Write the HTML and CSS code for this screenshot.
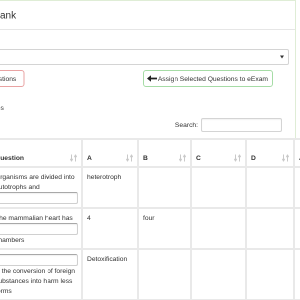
FILE: index.html
```html
<!DOCTYPE html>
<html lang="en">
<head>
    <meta charset="UTF-8">
    <title>Question Bank</title>
    <link rel="stylesheet" href="styles.css">
</head>
<body>
    <!-- Page drawn at twice its size, then scaled down -->
    <div class="page">
        <!-- Panel principal -->
        <div class="panel">
            <div class="panel-heading">Question Bank</div>

            <div class="panel-body">
                <!-- Choix du sujet -->
                <div class="select"><span class="caret"></span></div>

                <!-- Boutons -->
                <div class="actions">
                    <button class="btn btn-red">Delete Selected Questions</button>
                    <button class="btn btn-green">
                        <svg class="arrow" width="20" height="14" viewBox="0 0 10 7"><path d="M0 3.5 L4 0.3 L4 2.6 L10 2.6 L10 4.4 L4 4.4 L4 6.7 Z"/></svg>
                        Assign Selected Questions to eExam
                    </button>
                </div>

                <div class="length">
                    Show <span class="mini-select"></span> entries
                </div>

                <div class="search">
                    <label>Search:</label>
                    <input type="text" class="search-input">
                </div>

                <!-- Tableau des questions -->
                <table class="grid">
                    <thead>
                        <tr>
                            <th class="c-check"><input type="checkbox" class="check"></th>
                            <th class="c-no"><div class="th-in"><span>#</span></div></th>
                            <th class="c-q"><div class="th-in"><span>Question</span><svg class="sort" width="14" height="14" viewBox="0 0 7 7"><path d="M1.5 0 V5.5 M0.3 4.3 L1.5 6.6 L2.7 4.3 M5.5 7 V1.5 M4.3 2.7 L5.5 0.4 L6.7 2.7"/></svg></div></th>
                            <th class="c-a"><div class="th-in"><span>A</span><svg class="sort" width="14" height="14" viewBox="0 0 7 7"><path d="M1.5 0 V5.5 M0.3 4.3 L1.5 6.6 L2.7 4.3 M5.5 7 V1.5 M4.3 2.7 L5.5 0.4 L6.7 2.7"/></svg></div></th>
                            <th class="c-b"><div class="th-in"><span>B</span><svg class="sort" width="14" height="14" viewBox="0 0 7 7"><path d="M1.5 0 V5.5 M0.3 4.3 L1.5 6.6 L2.7 4.3 M5.5 7 V1.5 M4.3 2.7 L5.5 0.4 L6.7 2.7"/></svg></div></th>
                            <th class="c-c"><div class="th-in"><span>C</span><svg class="sort" width="14" height="14" viewBox="0 0 7 7"><path d="M1.5 0 V5.5 M0.3 4.3 L1.5 6.6 L2.7 4.3 M5.5 7 V1.5 M4.3 2.7 L5.5 0.4 L6.7 2.7"/></svg></div></th>
                            <th class="c-d"><div class="th-in"><span>D</span><svg class="sort" width="14" height="14" viewBox="0 0 7 7"><path d="M1.5 0 V5.5 M0.3 4.3 L1.5 6.6 L2.7 4.3 M5.5 7 V1.5 M4.3 2.7 L5.5 0.4 L6.7 2.7"/></svg></div></th>
                            <th class="c-e"><div class="th-in"><span>Answer</span></div></th>
                            <th class="c-f"><div class="th-in"><span>Marks</span></div></th>
                        </tr>
                    </thead>
                    <tbody>
                        <tr>
                            <td><input type="checkbox" class="check"></td>
                            <td>1</td>
                            <td>Organisms are divided into autotrophs and<input type="text" class="blank"></td>
                            <td>heterotroph</td>
                            <td></td>
                            <td></td>
                            <td></td>
                            <td></td>
                            <td></td>
                        </tr>
                        <tr>
                            <td><input type="checkbox" class="check"></td>
                            <td>2</td>
                            <td>The mammalian heart has<input type="text" class="blank">chambers</td>
                            <td>4</td>
                            <td>four</td>
                            <td></td>
                            <td></td>
                            <td></td>
                            <td></td>
                        </tr>
                        <tr>
                            <td><input type="checkbox" class="check"></td>
                            <td>3</td>
                            <td><input type="text" class="blank">is the conversion of foreign substances into harm less forms</td>
                            <td>Detoxification</td>
                            <td></td>
                            <td></td>
                            <td></td>
                            <td></td>
                            <td></td>
                        </tr>
                    </tbody>
                </table>
            </div>
        </div>
    </div>
</body>
</html>
```

FILE: styles.css
```css
/* General */
html, body {
    overflow: hidden;
}

body {
    margin: 0;
    font-family: "Liberation Sans", Arial, sans-serif;
    font-size: 13.4px;
    line-height: 20px;
    color: #333333;
    background-color: #FFFFFF;
}

/* Whole page at 2x, scaled to half */
.page {
    width: 600px;
    transform: scale(0.5);
    transform-origin: 0 0;
    will-change: transform;
}

/* Panel */
.panel {
    box-sizing: border-box;
    width: 752px;
    margin-left: -160px;
    border: 2px solid #dfedd6;
}

.panel-heading {
    height: 56px;
    line-height: 56px;
    font-size: 20px;
    padding-left: 59px;
    border-bottom: 2px solid #e6e6e6;
}

.panel-body {
    padding: 38px 12px 0 12px;
}

/* Select */
.select {
    box-sizing: border-box;
    height: 32px;
    border: 2px solid #d4d4d4;
    border-radius: 4px;
    display: flex;
    align-items: center;
    justify-content: flex-end;
    padding-right: 8px;
}

.caret {
    width: 0;
    height: 0;
    border-left: 4px solid transparent;
    border-right: 4px solid transparent;
    border-top: 6px solid #333333;
}

/* Buttons */
.actions {
    display: flex;
    justify-content: space-between;
    margin-top: 10px;
    padding-right: 32px;
}

.btn {
    box-sizing: border-box;
    height: 34px;
    font-family: "Liberation Sans", Arial, sans-serif;
    font-size: 13.4px;
    color: #333333;
    background-color: #FFFFFF;
    border-radius: 6px;
    display: flex;
    align-items: center;
}

.btn-red {
    border: 2px solid #e9a3a3;
    padding: 0 14px 0 18px;
}

.btn-green {
    border: 2px solid #a6dca6;
    padding: 0 8px 0 6px;
    gap: 2px;
}

.arrow {
    fill: #222222;
}

/* Length + search */
.length {
    margin-top: 30px;
    height: 24px;
    display: flex;
    align-items: center;
    gap: 6px;
}

.mini-select {
    display: inline-block;
    width: 68px;
    height: 24px;
    box-sizing: border-box;
    border: 2px solid #d4d4d4;
    border-radius: 4px;
}

.search {
    margin-top: 8px;
    display: flex;
    justify-content: flex-end;
    align-items: center;
    gap: 6px;
    padding-right: 14px;
}

.search-input {
    box-sizing: border-box;
    width: 162px;
    height: 28px;
    border: 2px solid #d4d4d4;
    border-radius: 4px;
    box-shadow: inset 0 2px 2px rgba(0, 0, 0, 0.05);
    margin: 0;
}

/* Table */
.grid {
    margin-top: 12px;
    table-layout: fixed;
    width: 976px;
    border-collapse: separate;
    border-spacing: 0;
    border-top: 4px solid #e9e9e9;
    border-left: 4px solid #e9e9e9;
    background-color: #FFFFFF;
}

.grid th,
.grid td {
    box-sizing: border-box;
    border-right: 4px solid #e9e9e9;
    border-bottom: 4px solid #e9e9e9;
    text-align: left;
    vertical-align: top;
}

.grid th {
    font-weight: bold;
    padding: 24px 8px 6px 8px;
    vertical-align: bottom;
}

.grid td {
    padding: 8px 6px 6px 8px;
}

.th-in {
    display: flex;
    justify-content: space-between;
    align-items: center;
}

.sort {
    stroke: #c9c9c9;
    stroke-width: 1;
    fill: none;
}

.c-check { width: 62px; }
.c-no { width: 62px; }
.c-q { width: 184px; }
.c-a { width: 112px; }
.c-b { width: 106px; }
.c-c { width: 110px; }
.c-d { width: 96px; }
.c-e { width: 120px; }
.c-f { width: 120px; }

.check {
    width: 16px;
    height: 16px;
    margin: 0;
}

/* Blank for the answer */
.blank {
    display: block;
    box-sizing: border-box;
    width: 100%;
    height: 24px;
    margin: 0;
    border: 2px solid #d0d0d0;
    border-top-color: #a8a8a8;
    border-radius: 4px;
    box-shadow: inset 0 2px 2px rgba(0, 0, 0, 0.06);
}
```
